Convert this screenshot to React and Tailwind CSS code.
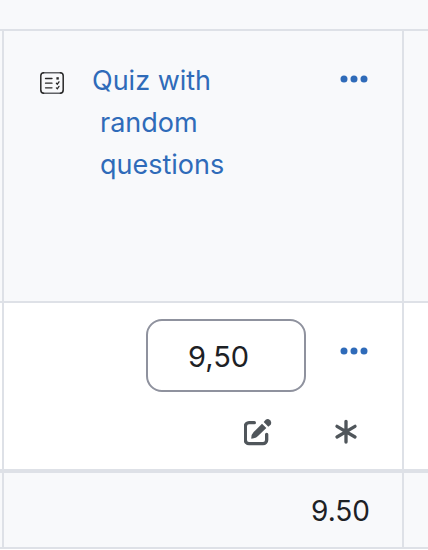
import React from "react";
import { FaEllipsis } from "react-icons/fa6";

const QuizIcon = () => (
  <svg
    width="24"
    height="22"
    viewBox="0 0 24 22"
    fill="none"
    stroke="#282828"
    strokeWidth="1.5"
    strokeLinecap="round"
    aria-hidden="true"
  >
    <path d="M3.6 .8h16.8" stroke="#606266" strokeWidth="1.6" />
    <path d="M3.6 21.2h16.8" stroke="#606266" strokeWidth="1.6" />
    <path d="M3.6 .8A3 3 0 0 0 .8 3.6v14.8a3 3 0 0 0 2.8 2.8M20.4 .8a3 3 0 0 1 2.8 2.8v14.8a3 3 0 0 1-2.8 2.8" />
    <path d="M5.5 6.5h6.5M5.5 11.2h6.5M5.5 15.8h6.5" strokeWidth="1.3" />
    <path d="M16.4 5.2h2.4v2.4h-2.4z" fill="#282828" stroke="none" />
    <path d="M16.4 11.3l.9 .9 1.7-2.4M16.4 15.9l.9 .9 1.7-2.4" strokeWidth="1.3" />
  </svg>
);

const EditIcon = () => (
  <svg
    width="28"
    height="28"
    viewBox="3 0 84 84"
    fill="currentColor"
    aria-hidden="true"
  >
    <path
      d="M34 14H18A11 11 0 0 0 7 25V66A11 11 0 0 0 18 77H60A11 11 0 0 0 71 66V49"
      fill="none"
      stroke="currentColor"
      strokeWidth="10"
      strokeLinecap="round"
    />
    <path d="M25 62Q24 50 32 42L57 17L70 30L45 54Q37 62 25 62Z" />
    <path d="M62 12L68 5A11 11 0 0 1 83 20L76 26Z" />
  </svg>
);

const AsteriskIcon = () => (
  <svg
    width="28"
    height="28"
    viewBox="0 0 84 84"
    fill="none"
    stroke="currentColor"
    strokeWidth="10"
    strokeLinecap="round"
    aria-hidden="true"
  >
    <path d="M42 10V72M15 25L69 57M69 25L15 57" />
  </svg>
);

const MenuButton = ({ label }) => (
  <button
    type="button"
    aria-label={label}
    className="flex w-8 shrink-0 justify-center text-[32px] text-[#2f6bb9]"
  >
    <FaEllipsis />
  </button>
);

const rowBorder = "border-r-2 border-b-2 border-[#dee1e7]";

const App = () => {
  return (
    <table
      className="w-full table-fixed border-separate border-spacing-0 bg-[#f8f9fb] text-[28px] leading-[42px] text-[#1d2125]"
      style={{ fontFamily: 'Inter, "Liberation Sans", sans-serif' }}
    >
      <colgroup>
        <col className="w-1" />
        <col />
        <col className="w-6" />
      </colgroup>
      <thead>
        <tr className="h-[31px]">
          <td colSpan={3} className="border-b-2 border-[#dee1e7] p-0" />
        </tr>
        <tr className="h-[272px]">
          <td className={`${rowBorder} p-0`} />
          <th
            scope="col"
            className={`${rowBorder} pt-[29px] pr-8 pl-9 text-left align-top font-normal`}
          >
            <div className="flex items-start">
              <div className="flex h-[46px] w-6 shrink-0 items-center">
                <QuizIcon />
              </div>
              <a
                href="#quiz"
                className="ml-9 w-36 -indent-2 text-[27px] text-[#2f6bb9]"
              >
                Quiz with random questions
              </a>
              <div className="ml-auto flex h-[38px] items-center">
                <MenuButton label="Column actions" />
              </div>
            </div>
          </th>
          <td className="border-b-2 border-[#dee1e7] p-0" />
        </tr>
      </thead>
      <tbody>
        <tr className="h-[170px] bg-white">
          <td className="border-r-2 border-b-4 border-[#dee1e7] p-0" />
          <td className="border-r-2 border-b-4 border-[#dee1e7] pt-4 pr-8 pl-9 align-top">
            <div className="flex items-start justify-end gap-8">
              <input
                type="text"
                aria-label="Grade"
                defaultValue="9,50"
                className="h-[73px] w-40 rounded-2xl border-2 border-[#8f929e] bg-white px-10 pt-0.5 text-[29px]"
              />
              <div className="flex h-16 items-center">
                <MenuButton label="Grade actions" />
              </div>
            </div>
            <div className="mt-[26px] flex justify-end gap-[60px] pr-[10px] text-[#50565b]">
              <button type="button" aria-label="Edit grade">
                <EditIcon />
              </button>
              <button type="button" aria-label="Grade analysis">
                <AsteriskIcon />
              </button>
            </div>
          </td>
          <td className="border-b-4 border-[#dee1e7] p-0" />
        </tr>
        <tr className="h-[76px]">
          <td className={`${rowBorder} p-0`} />
          <td className={`${rowBorder} p-0 pt-[2px] pr-8 text-right`}>9.50</td>
          <td className="border-b-2 border-[#dee1e7] p-0" />
        </tr>
      </tbody>
    </table>
  );
};

export default App;
